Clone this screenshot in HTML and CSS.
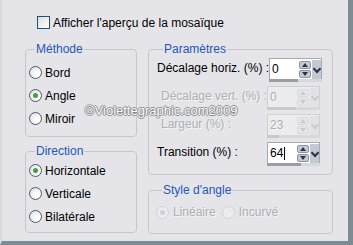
FILE: index.html
```html
<!DOCTYPE html>
<html lang="fr">

<head>
    <meta charset="UTF-8">
    <title>Mosaïque</title>
    <link rel="stylesheet" href="styles.css">
</head>

<body>
    <div class="window">
        <!-- Preview toggle -->
        <label class="check-row">
            <span class="checkbox"></span>
            <span>Afficher l'aperçu de la mosaïque</span>
        </label>

        <div class="columns">
            <!-- Left column -->
            <div class="col-left">
                <fieldset class="group group-method">
                    <legend>Méthode</legend>
                    <div class="radio-row"><span class="radio"></span>Bord</div>
                    <div class="radio-row"><span class="radio checked"></span>Angle</div>
                    <div class="radio-row"><span class="radio"></span>Miroir</div>
                </fieldset>

                <fieldset class="group group-direction">
                    <legend>Direction</legend>
                    <div class="radio-row"><span class="radio checked"></span>Horizontale</div>
                    <div class="radio-row"><span class="radio"></span>Verticale</div>
                    <div class="radio-row"><span class="radio"></span>Bilatérale</div>
                </fieldset>
            </div>

            <!-- Right column -->
            <div class="col-right">
                <fieldset class="group group-params">
                    <legend>Paramètres</legend>

                    <div class="param-row">
                        <span class="param-label">Décalage horiz. (%) :</span>
                        <div class="spin">
                            <div class="spin-box">
                                <span class="spin-value">0</span>
                                <span class="spin-arrows"><i class="up"></i><i class="down"></i></span>
                                <span class="spin-drop"></span>
                            </div>
                            <div class="spin-bar"><span style="width: 55%"></span></div>
                        </div>
                    </div>

                    <div class="param-row disabled">
                        <span class="param-label">Décalage vert. (%) :</span>
                        <div class="spin">
                            <div class="spin-box">
                                <span class="spin-value">0</span>
                                <span class="spin-arrows"><i class="up"></i><i class="down"></i></span>
                                <span class="spin-drop"></span>
                            </div>
                            <div class="spin-bar"><span style="width: 55%"></span></div>
                        </div>
                    </div>

                    <div class="param-row disabled">
                        <span class="param-label">Largeur (%) :</span>
                        <div class="spin">
                            <div class="spin-box">
                                <span class="spin-value">23</span>
                                <span class="spin-arrows"><i class="up"></i><i class="down"></i></span>
                                <span class="spin-drop"></span>
                            </div>
                            <div class="spin-bar"><span style="width: 23%"></span></div>
                        </div>
                    </div>

                    <div class="param-row">
                        <span class="param-label">Transition (%) :</span>
                        <div class="spin">
                            <div class="spin-box">
                                <span class="spin-value">64<span class="caret"></span></span>
                                <span class="spin-arrows"><i class="up"></i><i class="down"></i></span>
                                <span class="spin-drop"></span>
                            </div>
                            <div class="spin-bar"><span style="width: 64%"></span></div>
                        </div>
                    </div>
                </fieldset>

                <fieldset class="group group-style disabled">
                    <legend>Style d'angle</legend>
                    <div class="inline-radios">
                        <div class="radio-row"><span class="radio checked"></span>Linéaire</div>
                        <div class="radio-row"><span class="radio"></span>Incurvé</div>
                    </div>
                </fieldset>
            </div>
        </div>

        <span class="watermark">©Violettegraphic.com2009</span>
    </div>
</body>

</html>
```

FILE: styles.css
```css
/* Reset */
* {
    margin: 0;
    padding: 0;
    box-sizing: border-box;
}

body {
    font-family: "Liberation Sans", Arial, sans-serif;
    font-size: 12px;
    color: #000;
    background-color: #7d8b93;
}

/* Dialog window */
.window {
    position: relative;
    width: 353px;
    height: 245px;
    background-color: #e5e5e9;
    border-left: 2px solid #d9d9de;
    border-right: 5px solid #7d8b93;
    border-bottom: 4px solid #7d8b93;
    padding: 16px 0 0 23px;
    white-space: nowrap;
}

/* Checkbox row */
.check-row {
    display: flex;
    align-items: center;
    gap: 3px;
    margin-left: 12px;
    height: 13px;
}

.checkbox {
    width: 13px;
    height: 13px;
    border: 1px solid #1f4f7c;
    background: linear-gradient(135deg, #dcdcd8, #ffffff);
}

/* Columns */
.columns {
    display: flex;
    gap: 11px;
    margin-top: 13px;
}

.col-left {
    width: 112px;
}

.col-right {
    width: 185px;
}

/* Group boxes */
.group {
    border: 1px solid #c6c6cc;
    border-radius: 4px;
    min-width: 0;
}

.group legend {
    color: #2456b8;
    padding: 0 1px;
    margin-left: 6px;
    line-height: 15px;
}

.group-method {
    padding: 4px 0 6px 3px;
}

.group-direction {
    margin-top: 7px;
    padding: 0 0 4px 3px;
}

.group-params {
    padding: 1px 0 4px 8px;
}

.group-style {
    margin-top: 8px;
    padding: 3px 0 10px 7px;
}

/* Radio buttons */
.radio-row {
    display: flex;
    align-items: center;
    gap: 3px;
    height: 23px;
}

.radio {
    flex: none;
    width: 13px;
    height: 13px;
    border-radius: 50%;
    border: 1px solid #4b5a6a;
    background: radial-gradient(circle at 65% 65%, #ffffff 20%, #dcdce2 90%);
    display: flex;
    align-items: center;
    justify-content: center;
}

.radio.checked::after {
    content: "";
    width: 5px;
    height: 5px;
    border-radius: 50%;
    background-color: #3fa23f;
}

.inline-radios {
    display: flex;
    gap: 6px;
}

.group-style .radio-row {
    gap: 4px;
    height: 22px;
}

.disabled .radio {
    border-color: #d2d2d6;
    background: #ececee;
}

.disabled .radio.checked::after {
    background-color: #cfcfd3;
}

/* Parameter rows */
.param-row {
    display: flex;
    align-items: flex-start;
    justify-content: space-between;
    height: 28px;
    padding-right: 12px;
}

.param-label {
    line-height: 21px;
}

.param-row.disabled .param-label {
    padding-left: 4px;
}

.disabled,
.disabled legend {
    color: #aeaeb3;
    text-shadow: 1px 1px #f6f6f8;
}

.group-style.disabled legend {
    color: #2456b8;
    text-shadow: none;
}

.spin {
    flex: none;
    width: 53px;
}

.spin-box {
    display: flex;
    align-items: center;
    height: 21px;
    background-color: #fff;
    border: 1px solid #a8a8b0;
    border-bottom: none;
    padding-left: 2px;
}

.spin-value {
    flex: 1;
    display: flex;
    align-items: center;
}

.caret {
    width: 1px;
    height: 13px;
    background-color: #000;
    margin-left: 1px;
}

.spin-arrows {
    display: flex;
    flex-direction: column;
    gap: 1px;
    width: 12px;
    margin-right: 1px;
}

.spin-arrows i {
    height: 8px;
    border-radius: 2px;
    background-color: #c3cad6;
    border: 1px solid #8a93a3;
    position: relative;
}

.spin-arrows i::after {
    content: "";
    position: absolute;
    left: 2px;
    border-left: 3px solid transparent;
    border-right: 3px solid transparent;
}

.spin-arrows .up::after {
    top: 1px;
    border-bottom: 4px solid #2b3442;
}

.spin-arrows .down::after {
    top: 1px;
    border-top: 4px solid #2b3442;
}

.spin-drop {
    width: 9px;
    height: 19px;
    background-color: #c4c8d2;
    position: relative;
}

.spin-drop::after {
    content: "";
    position: absolute;
    left: 2px;
    top: 6px;
    width: 4px;
    height: 4px;
    border-right: 2px solid #2b3442;
    border-bottom: 2px solid #2b3442;
    transform: rotate(45deg);
}

.spin-bar {
    height: 3px;
    background-color: #d8d8dc;
}

.spin-bar span {
    display: block;
    height: 100%;
    background-color: #9c9ca6;
}

.param-row.disabled .spin-box {
    background-color: #ececee;
    border-color: #d0d0d4;
}

.param-row.disabled .spin-arrows i {
    background-color: #e4e6ea;
    border-color: #d6d8dc;
}

.param-row.disabled .spin-arrows i::after {
    border-top-color: #c8ccd0;
    border-bottom-color: #c8ccd0;
}

.param-row.disabled .spin-drop {
    background-color: #e2e2e6;
}

.param-row.disabled .spin-drop::after {
    border-color: #c8ccd0;
}

.param-row.disabled .spin-bar span {
    background-color: #c8c8cd;
}

/* Watermark over the dialog */
.watermark {
    position: absolute;
    left: 83px;
    top: 103px;
    font-size: 13px;
    color: #fafafa;
    text-shadow: 1px 0 #8d8d92, -1px 0 #8d8d92, 0 1px #8d8d92, 0 -1px #8d8d92;
}
```
